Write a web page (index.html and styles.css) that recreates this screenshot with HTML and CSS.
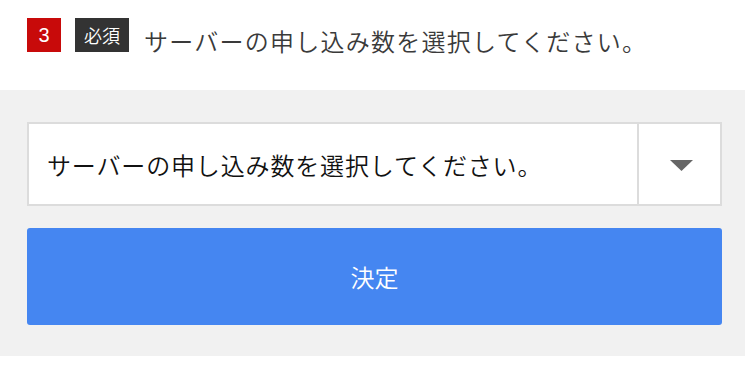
FILE: index.html
```html
<!DOCTYPE html>
<html lang="ja">
<head>
<meta charset="utf-8">
<link rel="stylesheet" href="styles.css">
</head>
<body>
<div class="page">
  <div class="head">
    <span class="num">3</span>
    <span class="req">必須</span>
    <span class="title">サーバーの申し込み数を選択してください。</span>
  </div>
  <div class="panel">
    <div class="select">
      <div class="select-text">サーバーの申し込み数を選択してください。</div>
      <div class="select-arrow">
        <svg width="23" height="11" viewBox="0 0 23 11"><polygon points="0,0 23,0 11.5,11" fill="#666"/></svg>
      </div>
    </div>
    <div class="btn">決定</div>
  </div>
</div>
</body>
</html>
```
FILE: styles.css
```css
* { box-sizing: border-box; }
html, body { margin: 0; padding: 0; background: #fff; }
body { font-family: "Noto Sans CJK JP", "Noto Sans", sans-serif; }
.page { width: 745px; }
.head {
  height: 90px;
  display: flex;
  align-items: flex-start;
  padding: 18px 0 0 27px;
}
.num {
  width: 34px; height: 34px;
  background: #c80a0a;
  color: #fff;
  font-family: "Liberation Sans", sans-serif;
  font-size: 20px;
  display: flex; align-items: center; justify-content: center;
}
.req {
  margin-left: 14px;
  width: 54px; height: 34px;
  background: #333;
  color: #fff;
  font-size: 18px;
  font-weight: 350;
  display: flex; align-items: center; justify-content: center;
}
.title {
  margin-left: 15px;
  font-size: 24px;
  font-weight: 350;
  line-height: 54px;
  margin-top: -4px;
  color: #3a3a3a;
  letter-spacing: 1.25px;
}
.panel {
  background: #f1f1f1;
  padding: 32px 23px 31px 27px;
}
.select {
  height: 84px;
  display: flex;
  background: #fff;
  border: 2px solid #dcdcdc;
}
.select-text {
  flex: 1;
  padding-left: 18px;
  display: flex; align-items: center;
  font-size: 24px;
  font-weight: 350;
  color: #111;
  border-right: 2px solid #dcdcdc;
  letter-spacing: 0.85px;
}
.select-arrow {
  width: 81px;
  display: flex; align-items: center; justify-content: center;
  padding: 2px 0 0 4px;
}
.btn {
  margin-top: 22px;
  height: 97px;
  background: #4586f1;
  border-radius: 3px;
  color: #fff;
  font-size: 24px;
  font-weight: 350;
  display: flex; align-items: center; justify-content: center;
}
```
